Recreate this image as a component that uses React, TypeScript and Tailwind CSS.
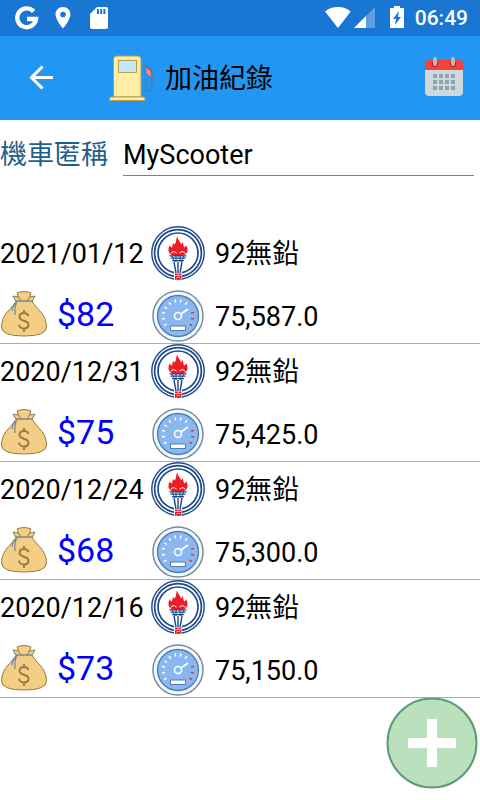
import { useState } from 'react';

type Refuel = {
  date: string;
  fuel: string;
  cost: string;
  mileage: string;
};

const records: Refuel[] = [
  { date: '2021/01/12', fuel: '92無鉛', cost: '$82', mileage: '75,587.0' },
  { date: '2020/12/31', fuel: '92無鉛', cost: '$75', mileage: '75,425.0' },
  { date: '2020/12/24', fuel: '92無鉛', cost: '$68', mileage: '75,300.0' },
  { date: '2020/12/16', fuel: '92無鉛', cost: '$73', mileage: '75,150.0' },
];

const StatusBar = () => (
  <div className="flex h-9 items-center justify-between bg-[#1976d2] pr-3 pl-[15px] text-white">
    <div className="flex items-center">
      <svg className="h-6 w-6" viewBox="0 0 24 24" fill="none" stroke="currentColor" strokeWidth="4.4">
        <path d="M18.6 5.4A9.4 9.4 0 1 0 21 13H12" />
      </svg>
      <svg className="ml-3 h-6 w-6" viewBox="0 0 24 24" fill="currentColor">
        <path fillRule="evenodd" d="M12 1C7.6 1 4.500 4.200 4.500 8.500c0 5 7.500 14 7.500 14s7.500-9 7.500-14C19.500 4.200 16.400 1 12 1zm0 4.700a2.800 2.800 0 1 1 0 5.600 2.800 2.800 0 0 1 0-5.600z" />
      </svg>
      <svg className="ml-3 h-6 w-6" viewBox="0 0 24 24" fill="currentColor">
        <path fillRule="evenodd" d="M10 1h9c1.200 0 2 .8 2 2v18c0 1.200-.8 2-2 2H5c-1.200 0-2-.8-2-2V8zm0 2v5h2V3zm3.200 0v5h2V3zm3.200 0v5h2V3z" />
      </svg>
    </div>
    <div className="flex items-center">
      <svg className="h-6 w-7" viewBox="0 0 28 24" fill="currentColor">
        <path d="M15 22 2 5.500C5.700 2.300 10 1 15 1s9 1.300 12.700 4.500z" />
      </svg>
      <svg className="ml-0.5 h-6 w-6" viewBox="0 0 24 24" fill="currentColor">
        <path opacity=".3" d="M1 22 22 1v21z" />
        <path d="M1 22 13 10v12z" />
      </svg>
      <svg className="ml-2 h-6 w-6" viewBox="0 0 24 24" fill="currentColor">
        <path fillRule="evenodd" d="M9 0h6v2h4v20H5V2h4zm5 5-6 8h3l-1 6 6-8h-3z" />
      </svg>
      <span className="ml-1.5 text-[21px] leading-6 font-medium">06:49</span>
    </div>
  </div>
);

const FuelPump = () => (
  <svg className="h-12 w-12" viewBox="0 0 48 48" fill="none">
    <path d="M33.500 26q3.500 0 3.500 3v6q0 2.500 3 2.500t3-2.500V19q0-2-1.500-4L35 9.500" stroke="#4a7ba8" strokeWidth="1.200" />
    <path d="m37 13 5 4.500V24l-5-5z" fill="#f78f8f" stroke="#d95056" />
    <path d="M4.500 43V5q0-3 3-3h21.500q3 0 3 3v38z" fill="#ffeea3" stroke="#ba9b48" />
    <path d="M.5 46.500V45q0-2 2-2h31.500q2 0 2 2v1.500z" fill="#ffeea3" stroke="#ba9b48" />
    <path d="M9.500 6.500h18v12h-18z" fill="#c2e8ff" stroke="#ba9b48" />
  </svg>
);

const CalendarIcon = () => (
  <svg className="h-12 w-12" viewBox="0 0 48 48">
    <path d="M5 16h38v22q0 4-4 4H9q-4 0-4-4z" fill="#cfd8dc" />
    <path d="M43 10v6H5v-6q0-4 4-4h30q4 0 4 4z" fill="#f44336" />
    <circle cx="15" cy="10" r="3" fill="#b71c1c" />
    <circle cx="33" cy="10" r="3" fill="#b71c1c" />
    <path d="M15 5v5M33 5v5" stroke="#b0bec5" strokeWidth="4" strokeLinecap="round" />
    <path
      d="M13 20h4v4h-4zm6 0h4v4h-4zm6 0h4v4h-4zm6 0h4v4h-4zM13 26h4v4h-4zm6 0h4v4h-4zm6 0h4v4h-4zm6 0h4v4h-4zM13 32h4v4h-4zm6 0h4v4h-4zm6 0h4v4h-4zm6 0h4v4h-4z"
      fill="#90a4ae"
    />
  </svg>
);

const TorchLogo = () => (
  <svg className="h-[54px] w-[54px]" viewBox="0 0 54 54" fill="none">
    <circle cx="27" cy="27" r="27" fill="#fff" />
    <g stroke="#1c4a8c">
      <circle cx="27" cy="27" r="26.2" strokeWidth="1.4" />
      <circle cx="27" cy="27" r="23.4" strokeWidth="1.7" />
      <circle cx="27" cy="27" r="20" strokeWidth="1.7" />
    </g>
    <path d="M23 44h8v10h-8z" fill="#fff" />
    <path
      d="M26.500 10c-1 3 3 5 3.500 8.500 1-.8 1.200-1.800 1-3 1.800 2.300.8 4.500 2.500 6 1-.5 1.500-1.500 1.500-2.500 3 5 1.500 9-3.500 11h-9c-5-2-6.500-6-3.500-11 0 1 .5 2 1.500 2.500 1.500-1 .5-3 2-5 0 1 .2 1.500 1 2 2.500-2.500 1-5.500 3-8.500z"
      fill="#ee1c25"
    />
    <path d="M20 27.500q1.500-3.500 5.500-.5m3 0q4-3 5.500.5" stroke="#fff" strokeWidth="1" />
    <path d="M18.500 29.800h17M19.500 32.200h15M21 34.600h12" stroke="#1c4a8c" strokeWidth="1.3" />
    <path d="M21 30l3 6m9-6-3 6m-5-7v7m4-7v7" stroke="#1c4a8c" />
    <path d="m23 36 2 11M31 36l-2 11M27 36v11" stroke="#1c4a8c" strokeWidth="1.4" />
    <path d="M24 47.500h6.500V54H24z" fill="#ee1c25" />
    <path d="M24 49.500h6.500M25.500 51.500h3.500M27.200 47.500v2M25 53.300h1m2.500 0h1" stroke="#fff" strokeWidth=".6" />
  </svg>
);

const MoneyBag = () => (
  <svg className="h-12 w-12" viewBox="0 0 48 48" fill="none" strokeLinejoin="round">
    <path
      d="M16 11.500 13 6l5.500 1-1.500-4 3-1q4-1 8 0l3 1-1.500 4L35 6l-3 5.500q2 3 6.500 8Q46.500 27 46.500 37q0 9-22.500 9T1.500 37q0-10 8-17.500 4.500-5 6.500-8z"
      fill="#f5ce85"
      stroke="#967a44"
    />
    <path d="m18.500 7 2.500 4.500m8.500-4.500L27 11.500" stroke="#967a44" />
    <path d="M16 11h17M18 11q-5 3-6 10m4.500-8q-2 3-1.500 12" stroke="#788b9c" strokeWidth="1.3" />
    <path d="M28.500 26q-1-3-4.500-3-4.500 0-4.500 4c0 4.500 9 3 9 7.500q0 4-4.500 4-4.500 0-5-4M24 20v3m0 15.500V42" stroke="#967a44" strokeWidth="1.9" />
  </svg>
);

const Speedometer = () => (
  <svg className="h-[52px] w-[54px]" viewBox="-1 0 54 52" fill="none">
    <circle cx="26" cy="26" r="25" fill="#f2faff" stroke="#788b9c" strokeWidth="1.5" />
    <circle cx="26" cy="26" r="20.5" fill="#8bb7f0" stroke="#4e7ab5" strokeWidth="1.3" />
    <path
      d="M12 35.500l2.600-1.400M10 29l3-.5M10 22.500l3 .6M12.500 17l2.500 1.700M17 12.300l1.800 2.500M23 9.500l.6 3M29 9.500l-.6 3M35 12.300l-1.800 2.500"
      stroke="#fff"
      strokeWidth="1.5"
    />
    <path d="M42 22.500l-3 .6M42 29l-3-.5M40 35.500l-2.600-1.400" stroke="#c74343" strokeWidth="1.5" />
    <path d="m29 24 7-5" stroke="#fff" strokeWidth="2" />
    <circle cx="26" cy="26" r="3.5" stroke="#fff" strokeWidth="1.6" />
    <path d="M18.500 36h15v4.500h-15z" fill="#fff" stroke="#4e7ab5" />
  </svg>
);

const RecordRow = ({ record }: { record: Refuel }) => (
  <li className="border-b border-[#ffa500]">
    <div className="grid grid-cols-[151px_64px_1fr] items-center">
      <span className="pt-0.5">{record.date}</span>
      <TorchLogo />
      <span className="pt-0.5">{record.fuel}</span>
    </div>
    <div className="grid grid-cols-[151px_64px_1fr] items-center pt-2.5 pb-px">
      <div className="flex items-center gap-[9px] pb-1">
        <MoneyBag />
        <span className="text-[34px] leading-10 text-[#0000ff]">{record.cost}</span>
      </div>
      <Speedometer />
      <span className="pt-0.5">{record.mileage}</span>
    </div>
  </li>
);

const App = () => {
  const [nickname, setNickname] = useState('MyScooter');

  return (
    <div className="min-h-screen bg-white font-['Roboto','Noto_Sans_CJK_TC',sans-serif] text-[27px] leading-8 text-black">
      <StatusBar />
      <header className="flex h-21 items-center bg-[#2196f3] pr-3 pl-4">
        <button type="button" aria-label="Back" className="flex h-12 w-12 items-center justify-center text-white">
          <svg className="h-9 w-9" viewBox="0 0 36 36" fill="none" stroke="currentColor" strokeWidth="3">
            <path d="M31 17.500H9M20.500 6.500l-11 11 11 11" />
          </svg>
        </button>
        <div className="ml-[45px] flex items-center gap-2">
          <FuelPump />
          <h1 className="pt-0.5">加油紀錄</h1>
        </div>
        <button type="button" aria-label="Calendar" className="ml-auto">
          <CalendarIcon />
        </button>
      </header>
      <main className="pb-24">
        <div className="flex items-start pt-4 pr-1.5">
          <label htmlFor="nickname" className="w-[123px] shrink-0 py-[3px] text-[#1f5f8b]">
            機車匿稱
          </label>
          <input
            id="nickname"
            type="text"
            value={nickname}
            onChange={(e) => setNickname(e.target.value)}
            className="h-10 min-w-0 flex-1 border-b border-[#808080] pb-0.5 outline-none"
          />
        </div>
        <ul className="mt-[50px]">
          {records.map((record) => (
            <RecordRow key={record.date} record={record} />
          ))}
        </ul>
      </main>
      <button type="button" aria-label="Add" className="fixed right-0.5 bottom-[11px]">
        <svg className="h-23 w-23" viewBox="0 0 92 92">
          <circle cx="46" cy="46" r="44.5" fill="#bae0bd" stroke="#5e9c76" strokeWidth="2" />
          <path d="M22 46h48M46 22v48" stroke="#fff" strokeWidth="10" />
        </svg>
      </button>
    </div>
  );
};

export default App;
